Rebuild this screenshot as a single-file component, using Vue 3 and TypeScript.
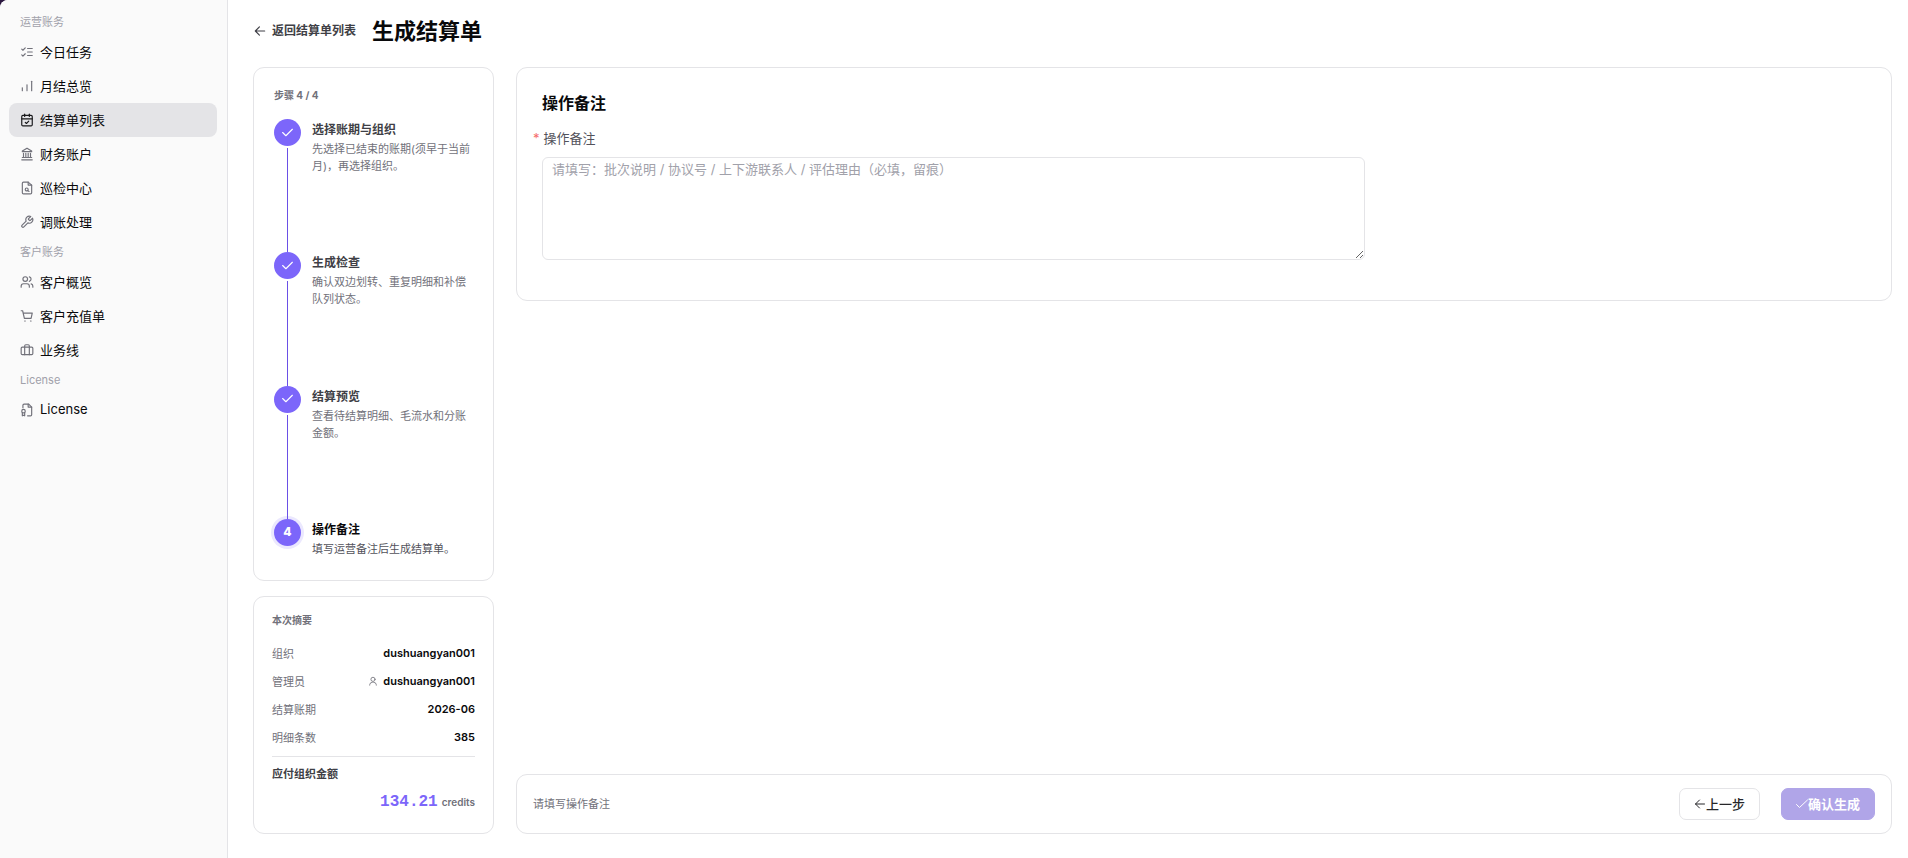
<script setup lang="ts">
import { ref } from 'vue'

interface NavItem {
  label: string
  icon: string[]
  active?: boolean
}
interface NavGroup {
  title: string
  items: NavItem[]
}
interface Step {
  title: string
  desc: string
}

const groups: NavGroup[] = [
  {
    title: '运营账务',
    items: [
      { label: '今日任务', icon: ['m3 17 2 2 4-4', 'm3 7 2 2 4-4', 'M13 6h8', 'M13 12h8', 'M13 18h8'] },
      { label: '月结总览', icon: ['M4 20v-5', 'M12 20v-10', 'M20 20V4'] },
      {
        label: '结算单列表',
        active: true,
        icon: ['M8 2v4', 'M16 2v4', 'M5 4h14a2 2 0 0 1 2 2v14a2 2 0 0 1-2 2H5a2 2 0 0 1-2-2V6a2 2 0 0 1 2-2z', 'M3 10h18', 'm9 16 2 2 4-4'],
      },
      {
        label: '财务账户',
        icon: ['M3 22h18', 'M6 18v-7', 'M10 18v-7', 'M14 18v-7', 'M18 18v-7', 'M4 18h16', 'm12 2 8 5v1H4V7z'],
      },
      {
        label: '巡检中心',
        icon: ['M14 2H6a2 2 0 0 0-2 2v16a2 2 0 0 0 2 2h12a2 2 0 0 0 2-2V7z', 'M14 2v5h6', 'M14 14.500a2.500 2.500 0 1 1-5 0 2.500 2.500 0 0 1 5 0z', 'm13.500 16.500 2 1.500'],
      },
      {
        label: '调账处理',
        icon: ['M14.700 6.300a1 1 0 0 0 0 1.400l1.600 1.600a1 1 0 0 0 1.400 0l3.770-3.770a6 6 0 0 1-7.940 7.940l-6.910 6.910a2.120 2.120 0 0 1-3-3l6.910-6.910a6 6 0 0 1 7.940-7.940l-3.760 3.760z'],
      },
    ],
  },
  {
    title: '客户账务',
    items: [
      {
        label: '客户概览',
        icon: ['M16 21v-2a4 4 0 0 0-4-4H6a4 4 0 0 0-4 4v2', 'M13 7a4 4 0 1 1-8 0 4 4 0 0 1 8 0z', 'M22 21v-2a4 4 0 0 0-3-3.870', 'M16 3.130a4 4 0 0 1 0 7.750'],
      },
      {
        label: '客户充值单',
        icon: ['M2 3h2.500l3 13h11.500l2-9H5.500', 'M8 20.500h1', 'M18 20.500h1'],
      },
      {
        label: '业务线',
        icon: ['M4 7h16a2 2 0 0 1 2 2v9a2 2 0 0 1-2 2H4a2 2 0 0 1-2-2V9a2 2 0 0 1 2-2z', 'M8 20V5a2 2 0 0 1 2-2h4a2 2 0 0 1 2 2v15'],
      },
    ],
  },
  {
    title: 'License',
    items: [
      {
        label: 'License',
        icon: ['M5 8V4a2 2 0 0 1 2-2h8l5 5v13a2 2 0 0 1-2 2h-5', 'M14 2v5h6', 'M9 14a3 3 0 1 1-6 0 3 3 0 0 1 6 0z', 'M4 16.500V22l2-1 2 1v-5.500'],
      },
    ],
  },
]

const steps: Step[] = [
  { title: '选择账期与组织', desc: '先选择已结束的账期(须早于当前月)，再选择组织。' },
  { title: '生成检查', desc: '确认双边划转、重复明细和补偿队列状态。' },
  { title: '结算预览', desc: '查看待结算明细、毛流水和分账金额。' },
  { title: '操作备注', desc: '填写运营备注后生成结算单。' },
]
const current = 3

const summary = [
  { label: '组织', value: 'dushuangyan001', user: false },
  { label: '管理员', value: 'dushuangyan001', user: true },
  { label: '结算账期', value: '2026-06', user: false },
  { label: '明细条数', value: '385', user: false },
]

const remark = ref('')
</script>

<template>
  <div class="app">
    <nav class="sidebar" aria-label="主导航">
      <section v-for="group in groups" :key="group.title">
        <h2 class="group-title">{{ group.title }}</h2>
        <a
          v-for="item in group.items"
          :key="item.label"
          href="#"
          class="nav-item"
          :class="{ active: item.active }"
        >
          <svg class="icon" viewBox="0 0 24 24" aria-hidden="true">
            <path v-for="d in item.icon" :key="d" :d="d" />
          </svg>
          <span>{{ item.label }}</span>
        </a>
      </section>
    </nav>

    <main class="main">
      <header class="header">
        <a href="#" class="back">
          <svg class="icon" viewBox="0 0 24 24" aria-hidden="true"><path d="M20 12H4m7-7-7 7 7 7" /></svg>
          <span>返回结算单列表</span>
        </a>
        <h1>生成结算单</h1>
      </header>

      <div class="columns">
        <aside class="side">
          <section class="card steps-card">
            <h2 class="caption">步骤 4 / 4</h2>
            <ol class="steps">
              <li
                v-for="(step, i) in steps"
                :key="step.title"
                class="step"
                :class="{ current: i === current }"
              >
                <div class="rail">
                  <span class="dot">
                    <svg v-if="i < current" class="icon" viewBox="0 0 24 24" aria-hidden="true"><path d="m3 12 6 6L21 6" /></svg>
                    <template v-else>{{ i + 1 }}</template>
                  </span>
                </div>
                <div class="step-text">
                  <h3>{{ step.title }}</h3>
                  <p>{{ step.desc }}</p>
                </div>
              </li>
            </ol>
          </section>

          <section class="card summary">
            <h2 class="caption">本次摘要</h2>
            <dl>
              <div v-for="row in summary" :key="row.label" class="row">
                <dt>{{ row.label }}</dt>
                <dd>
                  <svg v-if="row.user" class="icon user" viewBox="0 0 24 24" aria-hidden="true">
                    <circle cx="12" cy="8" r="5" />
                    <path d="M4 22v-1a7 7 0 0 1 7-6h2a7 7 0 0 1 7 6v1" />
                  </svg>
                  <span>{{ row.value }}</span>
                </dd>
              </div>
            </dl>
            <div class="total">
              <h3>应付组织金额</h3>
              <p><strong>134.21</strong><span>credits</span></p>
            </div>
          </section>
        </aside>

        <form class="content" @submit.prevent>
          <section class="card form-card">
            <h2>操作备注</h2>
            <label for="remark"><span class="star">*</span>操作备注</label>
            <textarea
              id="remark"
              v-model="remark"
              placeholder="请填写：批次说明 / 协议号 / 上下游联系人 / 评估理由（必填，留痕）"
            ></textarea>
          </section>

          <footer class="card actions">
            <p>请填写操作备注</p>
            <button type="button" class="btn">
              <svg class="icon" viewBox="0 0 24 24" aria-hidden="true"><path d="M21 12H3m8-8-8 8 8 8" /></svg>
              <span>上一步</span>
            </button>
            <button type="submit" class="btn primary" disabled>
              <svg class="icon" viewBox="0 0 24 24" aria-hidden="true"><path d="m1 13 6 6L23 4" /></svg>
              <span>确认生成</span>
            </button>
          </footer>
        </form>
      </div>
    </main>
  </div>
</template>

<style>
html {
  background: #2b1740;
}
body {
  margin: 0;
}
</style>

<style scoped>
* {
  box-sizing: border-box;
}
h1,
h2,
h3,
p,
dl,
dd,
ol {
  margin: 0;
  padding: 0;
}
.app {
  display: flex;
  min-height: 100vh;
  overflow: hidden;
  border-top-left-radius: 8px;
  background: #fff;
  color: #09090b;
  font-family: Inter, "Noto Sans CJK SC", sans-serif;
  font-size: 13px;
}
.icon {
  flex: none;
  width: 14px;
  height: 14px;
  fill: none;
  stroke: currentColor;
  stroke-width: 2;
  stroke-linecap: round;
  stroke-linejoin: round;
}

.sidebar {
  flex: none;
  width: 228px;
  padding: 9px 10px 9px 9px;
  border-right: 1px solid #e4e4e7;
  background: #fafafa;
}
.group-title {
  padding-left: 11px;
  color: #a1a1aa;
  font-size: 11px;
  font-weight: 400;
  line-height: 26px;
}
.nav-item {
  display: flex;
  align-items: center;
  gap: 6px;
  height: 34px;
  padding: 0 10px 0 11px;
  border-radius: 8px;
  color: #09090b;
  text-decoration: none;
}
.nav-item span {
  padding-bottom: 2px;
}
.nav-item .icon {
  color: #71717a;
}
.nav-item.active {
  background: #e4e4e7;
}
.nav-item.active .icon {
  color: #18181b;
}

.main {
  display: flex;
  flex: 1;
  flex-direction: column;
  min-width: 0;
  padding: 0 16px 24px 25px;
}
.header {
  display: flex;
  align-items: center;
  gap: 16px;
  height: 67px;
  padding-bottom: 6px;
}
.header h1 {
  font-size: 22px;
  font-weight: 700;
  line-height: 32px;
}
.back {
  display: flex;
  align-items: center;
  gap: 5px;
  color: #3f3f46;
  font-size: 12px;
  font-weight: 600;
  text-decoration: none;
}
.back span {
  padding-bottom: 2px;
}
.columns {
  display: flex;
  flex: 1;
  gap: 22px;
}
.side {
  display: flex;
  flex: none;
  flex-direction: column;
  gap: 15px;
  width: 241px;
}
.card {
  border: 1px solid #e4e4e7;
  border-radius: 11px;
  background: #fff;
}
.caption {
  color: #71717a;
  font-size: 10px;
  font-weight: 700;
  line-height: 16px;
}

.steps-card {
  display: flex;
  flex: 1;
  flex-direction: column;
  padding: 19px 20px 20px;
}
.steps {
  display: flex;
  flex: 1;
  flex-direction: column;
  padding-top: 16px;
  list-style: none;
}
.step {
  display: flex;
  flex: 1;
  gap: 11px;
}
.step:last-child {
  flex: none;
  height: 41px;
}
.rail {
  display: flex;
  flex: none;
  flex-direction: column;
  align-items: center;
  gap: 2px;
  width: 27px;
}
.step:not(:last-child) .rail::after {
  z-index: 1;
  flex: 1;
  position: relative;
  width: 1px;
  background: #6a50e6;
  content: "";
}
.dot {
  display: grid;
  flex: none;
  place-items: center;
  width: 27px;
  height: 27px;
  padding-bottom: 1px;
  border-radius: 50%;
  background: #7c66fa;
  color: #fff;
  font-size: 12px;
  font-weight: 800;
}
.dot .icon {
  width: 13px;
  height: 13px;
}
.current .dot {
  box-shadow: 0 0 0 3px #ebe8fe;
}
.step-text h3 {
  padding: 2px 0;
  color: #3f3f46;
  font-size: 12px;
  font-weight: 600;
  line-height: 18px;
}
.step-text p {
  color: #71717a;
  font-size: 11px;
  line-height: 17px;
}
.current h3 {
  color: #09090b;
}
.current p {
  color: #52525b;
}

.summary {
  padding: 15px 18px 18px;
}
.summary dl {
  padding: 11px 0 5px;
}
.row {
  display: flex;
  align-items: center;
  justify-content: space-between;
  height: 28px;
}
.row dt {
  color: #71717a;
  font-size: 11px;
}
.row dd {
  display: flex;
  align-items: center;
  gap: 5px;
  font-size: 11px;
  font-weight: 600;
}
.icon.user {
  width: 10px;
  height: 10px;
  color: #71717a;
}
.total {
  padding-top: 8px;
  border-top: 1px solid #e4e4e7;
}
.total h3 {
  color: #3f3f46;
  font-size: 11px;
  font-weight: 600;
  line-height: 18px;
}
.total p {
  display: flex;
  align-items: baseline;
  justify-content: flex-end;
  gap: 4px;
  padding-top: 6px;
  color: #71717a;
  font-size: 10px;
  font-weight: 600;
  line-height: 26px;
}
.total strong {
  color: #7c66fa;
  font-family: "Liberation Mono", monospace;
  font-size: 16px;
  font-weight: 700;
}

.content {
  display: flex;
  flex: 1;
  flex-direction: column;
  justify-content: space-between;
  min-width: 0;
}
.form-card {
  display: flex;
  flex-direction: column;
  padding: 23px 25px 40px;
}
.form-card h2 {
  font-size: 16px;
  font-weight: 600;
  line-height: 24px;
}
.form-card label {
  display: flex;
  gap: 4px;
  margin-left: -9px;
  padding: 14px 0 10px;
  color: #52525b;
  line-height: 18px;
}
.star {
  color: #f56c6c;
}
.form-card textarea {
  width: 100%;
  max-width: 823px;
  height: 103px;
  padding: 2px 9px;
  border: 1px solid #e4e4e7;
  border-radius: 6px;
  outline: none;
  background: #fff;
  color: #09090b;
  font-family: inherit;
  font-size: 13px;
  line-height: 18px;
  resize: vertical;
}
.form-card textarea::placeholder {
  color: #a1a1aa;
}
.actions {
  display: flex;
  align-items: center;
  gap: 21px;
  height: 60px;
  padding: 0 16px;
}
.actions p {
  flex: 1;
  padding-bottom: 2px;
  color: #71717a;
  font-size: 11px;
}
.btn {
  display: flex;
  align-items: center;
  justify-content: center;
  height: 32px;
  padding: 0 14px;
  border: 1px solid #e4e4e7;
  border-radius: 7px;
  background: #fff;
  color: #27272a;
  font-family: inherit;
  font-size: 13px;
  font-weight: 500;
}
.btn span {
  padding-bottom: 2px;
}
.btn .icon {
  width: 12px;
  height: 12px;
}
.btn.primary {
  border-color: #b0a5e8;
  background: #b0a5e8;
  color: #fff;
  font-weight: 600;
}
</style>
